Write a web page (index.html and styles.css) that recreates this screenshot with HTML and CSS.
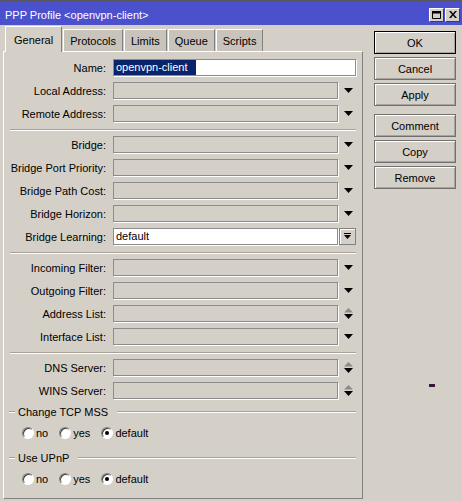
FILE: index.html
```html
<!DOCTYPE html>
<html lang="en">
<head>
    <meta charset="UTF-8">
    <meta name="viewport" content="width=device-width, initial-scale=1.0">
    <title>PPP Profile &lt;openvpn-client&gt;</title>
    <link rel="stylesheet" href="styles.css">
</head>
<body>
    <div class='window'>
        <div class='titlebar'>
            <span class='title'>PPP Profile &lt;openvpn-client&gt;</span>
            <span class='tbtn'>
                <svg width="9" height="8" viewBox="0 0 9 8"><path d="M0.5 1.5h8v6h-8z M0 0h9v2h-9z" fill="none" stroke="#000" stroke-width="1"/><rect x="0" y="0" width="9" height="2" fill="#000"/></svg>
            </span>
            <span class='tbtn'>
                <svg width="8" height="7" viewBox="0 0 8 7"><path d="M0 0h2l2 2.5 2-2.5h2l-3 3.5 3 3.5h-2l-2-2.5-2 2.5h-2l3-3.5z" fill="#000"/></svg>
            </span>
        </div>

        <div class='client'>
            <div class='notebook'>
                <div class='tabs'>
                    <span class='tab active'>General</span>
                    <span class='tab'>Protocols</span>
                    <span class='tab'>Limits</span>
                    <span class='tab'>Queue</span>
                    <span class='tab'>Scripts</span>
                </div>
                <div class='page'>
                    <div class='row'>
                        <span class='lbl'>Name:</span>
                        <span class='field edit wide'><span class='sel'>openvpn-client</span></span>
                    </div>
                    <div class='row'>
                        <span class='lbl'>Local Address:</span>
                        <span class='field'></span>
                        <span class='drop'><svg width="9" height="5"><polygon points="0,0 9,0 4.5,5" fill="#000"/></svg></span>
                    </div>
                    <div class='row'>
                        <span class='lbl'>Remote Address:</span>
                        <span class='field'></span>
                        <span class='drop'><svg width="9" height="5"><polygon points="0,0 9,0 4.5,5" fill="#000"/></svg></span>
                    </div>
                    <div class='sep'></div>

                    <div class='row'>
                        <span class='lbl'>Bridge:</span>
                        <span class='field'></span>
                        <span class='drop'><svg width="9" height="5"><polygon points="0,0 9,0 4.5,5" fill="#000"/></svg></span>
                    </div>
                    <div class='row'>
                        <span class='lbl'>Bridge Port Priority:</span>
                        <span class='field'></span>
                        <span class='drop'><svg width="9" height="5"><polygon points="0,0 9,0 4.5,5" fill="#000"/></svg></span>
                    </div>
                    <div class='row'>
                        <span class='lbl'>Bridge Path Cost:</span>
                        <span class='field'></span>
                        <span class='drop'><svg width="9" height="5"><polygon points="0,0 9,0 4.5,5" fill="#000"/></svg></span>
                    </div>
                    <div class='row'>
                        <span class='lbl'>Bridge Horizon:</span>
                        <span class='field'></span>
                        <span class='drop'><svg width="9" height="5"><polygon points="0,0 9,0 4.5,5" fill="#000"/></svg></span>
                    </div>
                    <div class='row'>
                        <span class='lbl'>Bridge Learning:</span>
                        <span class='field edit'>default</span>
                        <span class='pick'><svg width="7" height="7"><rect x="0" y="0" width="7" height="1" fill="#000"/><polygon points="0,2 7,2 3.5,6" fill="#000"/></svg></span>
                    </div>
                    <div class='sep'></div>

                    <div class='row'>
                        <span class='lbl'>Incoming Filter:</span>
                        <span class='field'></span>
                        <span class='drop'><svg width="9" height="5"><polygon points="0,0 9,0 4.5,5" fill="#000"/></svg></span>
                    </div>
                    <div class='row'>
                        <span class='lbl'>Outgoing Filter:</span>
                        <span class='field'></span>
                        <span class='drop'><svg width="9" height="5"><polygon points="0,0 9,0 4.5,5" fill="#000"/></svg></span>
                    </div>
                    <div class='row'>
                        <span class='lbl'>Address List:</span>
                        <span class='field'></span>
                        <span class='drop'><svg width="9" height="11"><polygon points="4.5,0 9,4.5 0,4.5" fill="#8c8c84"/><polygon points="0,6 9,6 4.5,11" fill="#000"/></svg></span>
                    </div>
                    <div class='row'>
                        <span class='lbl'>Interface List:</span>
                        <span class='field'></span>
                        <span class='drop'><svg width="9" height="5"><polygon points="0,0 9,0 4.5,5" fill="#000"/></svg></span>
                    </div>
                    <div class='sep'></div>

                    <div class='row'>
                        <span class='lbl'>DNS Server:</span>
                        <span class='field'></span>
                        <span class='drop'><svg width="9" height="11"><polygon points="4.5,0 9,4.5 0,4.5" fill="#8c8c84"/><polygon points="0,6 9,6 4.5,11" fill="#000"/></svg></span>
                    </div>
                    <div class='row'>
                        <span class='lbl'>WINS Server:</span>
                        <span class='field'></span>
                        <span class='drop'><svg width="9" height="11"><polygon points="4.5,0 9,4.5 0,4.5" fill="#8c8c84"/><polygon points="0,6 9,6 4.5,11" fill="#000"/></svg></span>
                    </div>

                    <div class='group-head'>
                        <span class='etch short'></span>
                        <span class='caption'>Change TCP MSS</span>
                        <span class='etch'></span>
                    </div>
                    <div class='choices'>
                        <span class='opt'><span class='radio'></span>no</span>
                        <span class='opt'><span class='radio'></span>yes</span>
                        <span class='opt'><span class='radio on'></span>default</span>
                    </div>

                    <div class='group-head'>
                        <span class='etch short'></span>
                        <span class='caption'>Use UPnP</span>
                        <span class='etch'></span>
                    </div>
                    <div class='choices'>
                        <span class='opt'><span class='radio'></span>no</span>
                        <span class='opt'><span class='radio'></span>yes</span>
                        <span class='opt'><span class='radio on'></span>default</span>
                    </div>
                </div>
            </div>

            <div class='actions'>
                <span class='btn default'>OK</span>
                <span class='btn'>Cancel</span>
                <span class='btn'>Apply</span>
                <span class='btn spaced'>Comment</span>
                <span class='btn'>Copy</span>
                <span class='btn'>Remove</span>
                <span class='mark'></span>
            </div>
        </div>
    </div>
</body>
</html>
```

FILE: styles.css
```css
* {
    box-sizing: border-box;
}
body {
    margin: 0;
    background: #d4d0c8;
    font: 11px "Liberation Sans", Arial, sans-serif;
    color: #000;
}
.window {
    width: 462px;
    height: 501px;
    overflow: hidden;
}

/* title bar */
.titlebar {
    display: flex;
    align-items: center;
    height: 25px;
    padding: 2px 2px 0 5px;
    border-top: 2px solid #58585e;
    background: #4b50cc;
}
.title {
    flex: 1;
    color: #fff;
}
.tbtn {
    display: flex;
    align-items: center;
    justify-content: center;
    width: 15px;
    height: 14px;
    margin-left: 1px;
    background: #d4d0c8;
    border: 1px solid;
    border-color: #fff #404040 #404040 #fff;
}

.client {
    display: flex;
    align-items: flex-start;
}

/* tabs */
.notebook {
    width: 360px;
    margin-left: 3px;
}
.tabs {
    display: flex;
    align-items: flex-end;
    gap: 1px;
    height: 26px;
    padding-left: 2px;
}
.tab {
    display: flex;
    align-items: center;
    height: 22px;
    padding: 1px 6px 0;
    background: #c8c4bc;
    border: 1px solid;
    border-color: #fff #808080 transparent #fff;
    border-bottom: 0;
}
.tab.active {
    position: relative;
    z-index: 1;
    height: 26px;
    padding: 0 8px;
    margin-bottom: -1px;
    background: #d4d0c8;
}
.page {
    height: 448px;
    padding-top: 7px;
    border: 1px solid;
    border-color: #fff #808080 #808080 #fff;
}

/* form rows */
.row {
    display: flex;
    align-items: center;
    height: 17px;
    margin-bottom: 6px;
}
.lbl {
    width: 102px;
    margin-right: 7px;
    text-align: right;
    white-space: nowrap;
}
.field {
    width: 225px;
    height: 17px;
    padding-left: 2px;
    line-height: 15px;
    background: #d4d0c8;
    border: 1px solid #8c8c8c;
    box-shadow: 1px 1px 0 #fff;
}
.field.edit {
    background: #fff;
}
.field.wide {
    width: 243px;
    padding-left: 0;
}
.sel {
    display: inline-block;
    height: 15px;
    padding: 0 8px 0 2px;
    background: #0a246a;
    color: #fff;
}
.drop {
    display: flex;
    align-items: center;
    width: 18px;
    padding-left: 6px;
}
.pick {
    display: flex;
    align-items: center;
    justify-content: center;
    width: 17px;
    height: 17px;
    margin-left: 1px;
    border: 1px solid #808080;
    box-shadow: inset 1px 1px #fff;
}
/* top margin collapses into the row's 6px */
.sep {
    margin: 7px 6px 5px;
    border-top: 1px solid #a6a29a;
    border-bottom: 1px solid #fff;
}

/* option groups */
.group-head {
    display: flex;
    align-items: center;
    height: 13px;
    margin: 0 6px 8px 5px;
}
.etch {
    flex: 1;
    height: 2px;
    border-top: 1px solid #a6a29a;
    border-bottom: 1px solid #fff;
}
.etch.short {
    flex: none;
    width: 6px;
}
.caption {
    margin: 0 9px 0 3px;
}
.choices {
    display: flex;
    align-items: center;
    height: 13px;
    padding-left: 18px;
    margin-bottom: 12px;
}
.opt {
    display: flex;
    align-items: center;
    margin-right: 11px;
}
.radio {
    position: relative;
    width: 12px;
    height: 12px;
    margin-right: 2px;
    border-radius: 50%;
    background: #fff;
    border: 1px solid;
    border-color: #808080 #fff #fff #808080;
    box-shadow: inset 1px 1px #404040;
}
.radio.on::after {
    content: '';
    position: absolute;
    left: 3px;
    top: 3px;
    width: 4px;
    height: 4px;
    border-radius: 50%;
    background: #000;
}

/* dialog buttons */
.actions {
    display: flex;
    flex-direction: column;
    gap: 3px;
    width: 82px;
    margin-left: 11px;
    padding-top: 6px;
}
.btn {
    display: flex;
    align-items: center;
    justify-content: center;
    height: 23px;
    background: #d4d0c8;
    border: 1px solid #707070;
    box-shadow: inset 1px 1px #fff, inset -1px -1px #a8a49c;
}
.btn.default {
    border-color: #000;
}
.btn.spaced {
    margin-top: 5px;
}
.mark {
    align-self: flex-start;
    width: 6px;
    height: 3px;
    margin: 192px 0 0 55px;
    background: #3a163a;
}
```
